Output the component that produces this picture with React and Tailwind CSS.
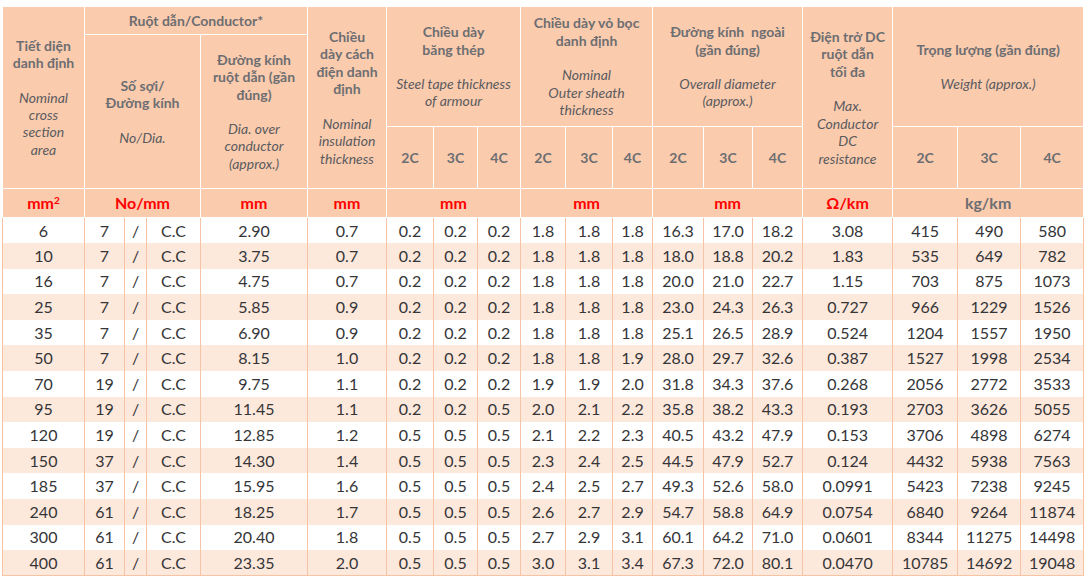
import React from 'react';

const rows = [
  ['6', '7', '2.90', '0.7', '0.2', '0.2', '0.2', '1.8', '1.8', '1.8', '16.3', '17.0', '18.2', '3.08', '415', '490', '580'],
  ['10', '7', '3.75', '0.7', '0.2', '0.2', '0.2', '1.8', '1.8', '1.8', '18.0', '18.8', '20.2', '1.83', '535', '649', '782'],
  ['16', '7', '4.75', '0.7', '0.2', '0.2', '0.2', '1.8', '1.8', '1.8', '20.0', '21.0', '22.7', '1.15', '703', '875', '1073'],
  ['25', '7', '5.85', '0.9', '0.2', '0.2', '0.2', '1.8', '1.8', '1.8', '23.0', '24.3', '26.3', '0.727', '966', '1229', '1526'],
  ['35', '7', '6.90', '0.9', '0.2', '0.2', '0.2', '1.8', '1.8', '1.8', '25.1', '26.5', '28.9', '0.524', '1204', '1557', '1950'],
  ['50', '7', '8.15', '1.0', '0.2', '0.2', '0.2', '1.8', '1.8', '1.9', '28.0', '29.7', '32.6', '0.387', '1527', '1998', '2534'],
  ['70', '19', '9.75', '1.1', '0.2', '0.2', '0.2', '1.9', '1.9', '2.0', '31.8', '34.3', '37.6', '0.268', '2056', '2772', '3533'],
  ['95', '19', '11.45', '1.1', '0.2', '0.2', '0.5', '2.0', '2.1', '2.2', '35.8', '38.2', '43.3', '0.193', '2703', '3626', '5055'],
  ['120', '19', '12.85', '1.2', '0.5', '0.5', '0.5', '2.1', '2.2', '2.3', '40.5', '43.2', '47.9', '0.153', '3706', '4898', '6274'],
  ['150', '37', '14.30', '1.4', '0.5', '0.5', '0.5', '2.3', '2.4', '2.5', '44.5', '47.9', '52.7', '0.124', '4432', '5938', '7563'],
  ['185', '37', '15.95', '1.6', '0.5', '0.5', '0.5', '2.4', '2.5', '2.7', '49.3', '52.6', '58.0', '0.0991', '5423', '7238', '9245'],
  ['240', '61', '18.25', '1.7', '0.5', '0.5', '0.5', '2.6', '2.7', '2.9', '54.7', '58.8', '64.9', '0.0754', '6840', '9264', '11874'],
  ['300', '61', '20.40', '1.8', '0.5', '0.5', '0.5', '2.7', '2.9', '3.1', '60.1', '64.2', '71.0', '0.0601', '8344', '11275', '14498'],
  ['400', '61', '23.35', '2.0', '0.5', '0.5', '0.5', '3.0', '3.1', '3.4', '67.3', '72.0', '80.1', '0.0470', '10785', '14692', '19048'],
];

const widths = [82, 40, 22, 54, 107, 79, 47, 44, 43, 45, 47, 40, 51, 49, 50, 90, 65, 63, 63];

// header cell: bold vietnamese lines, then italic english lines
function Head({ vi, en, ...rest }) {
  return (
    <th className="border border-white bg-[#fbcbae] align-middle text-center font-bold text-[14px] leading-[17.4px] text-[#6d6e71] px-0.5" {...rest}>
      <div>{vi}</div>
      {en && <div className="mt-[17px] font-normal italic text-[#5a5b5e]">{en}</div>}
    </th>
  );
}

function Sub({ children }) {
  return <th className="border border-white bg-[#fbcbae] text-center font-bold text-[14px] text-[#6d6e71]">{children}</th>;
}

function Unit({ children, colSpan, gray }) {
  return (
    <th colSpan={colSpan} className={`border border-white bg-[#fbcbae] text-center font-bold text-[16px] ${gray ? 'text-[#6d6e71]' : 'text-[#ff0000]'}`}>
      {children}
    </th>
  );
}

export default function App() {
  return (
    <div className="w-[1089px] h-[579px] bg-white overflow-hidden pt-[6px] pl-[2px]" style={{ fontFamily: 'Lato, "Noto Sans", sans-serif' }}>
      <table className="table-fixed border-collapse w-[1081px]">
        <colgroup>
          {widths.map((w, i) => <col key={i} style={{ width: w }} />)}
        </colgroup>
        <thead>
          <tr className="h-[28px]">
            <Head rowSpan={3} vi={<>Tiết diện<br />danh định</>} en={<>Nominal<br />cross<br />section<br />area</>} />
            <Head colSpan={4} vi="Ruột dẫn/Conductor*" />
            <Head rowSpan={3} vi={<>Chiều<br />dày cách<br />điện danh<br />định</>} en={<>Nominal<br />insulation<br />thickness</>} />
            <Head colSpan={3} rowSpan={2} vi={<>Chiều dày<br />băng thép</>} en={<>Steel tape thickness<br />of armour</>} />
            <Head colSpan={3} rowSpan={2} vi={<>Chiều dày vỏ bọc<br />danh định</>} en={<>Nominal<br />Outer sheath<br />thickness</>} />
            <Head colSpan={3} rowSpan={2} vi={<>Đường kính&nbsp; ngoài<br />(gần đúng)</>} en={<>Overall diameter<br />(approx.)</>} />
            <Head rowSpan={3} vi={<>Điện trở DC<br />ruột dẫn<br />tối đa</>} en={<>Max.<br />Conductor<br />DC<br />resistance</>} />
            <Head colSpan={3} rowSpan={2} vi="Trọng lượng (gần đúng)" en="Weight (approx.)" />
          </tr>
          <tr className="h-[92px]">
            <Head colSpan={3} rowSpan={2} vi={<>Số sợi/<br />Đường kính</>} en="No/Dia." />
            <Head rowSpan={2} vi={<>Đường kính<br />ruột dẫn (gần<br />đúng)</>} en={<>Dia. over<br />conductor<br />(approx.)</>} />
          </tr>
          <tr className="h-[62px]">
            {[0, 1, 2, 3].map((g) => (
              <React.Fragment key={g}>
                <Sub>2C</Sub>
                <Sub>3C</Sub>
                <Sub>4C</Sub>
              </React.Fragment>
            ))}
          </tr>
          <tr className="h-[29px]">
            <Unit>mm<sup className="text-[10px] -top-[0.5em]">2</sup></Unit>
            <Unit colSpan={3}>No/mm</Unit>
            <Unit>mm</Unit>
            <Unit>mm</Unit>
            <Unit colSpan={3}>mm</Unit>
            <Unit colSpan={3}>mm</Unit>
            <Unit colSpan={3}>mm</Unit>
            <Unit>Ω/km</Unit>
            <Unit colSpan={3} gray>kg/km</Unit>
          </tr>
        </thead>
        <tbody className="text-[16px] text-[#353537]">
          {rows.map((r, i) => {
            const cells = [r[0], r[1], '/', 'C.C', ...r.slice(2)];
            return (
              <tr key={i} className={`h-[25.6px] ${i % 2 ? 'bg-[#fde8dc]' : 'bg-white'} ${i === rows.length - 1 ? 'border-b border-[#f6c4a5]' : ''}`}>
                {cells.map((c, j) => (
                  <td key={j} className="border-x border-[#f6c4a5] text-center leading-none p-0">{c}</td>
                ))}
              </tr>
            );
          })}
        </tbody>
      </table>
    </div>
  );
}
